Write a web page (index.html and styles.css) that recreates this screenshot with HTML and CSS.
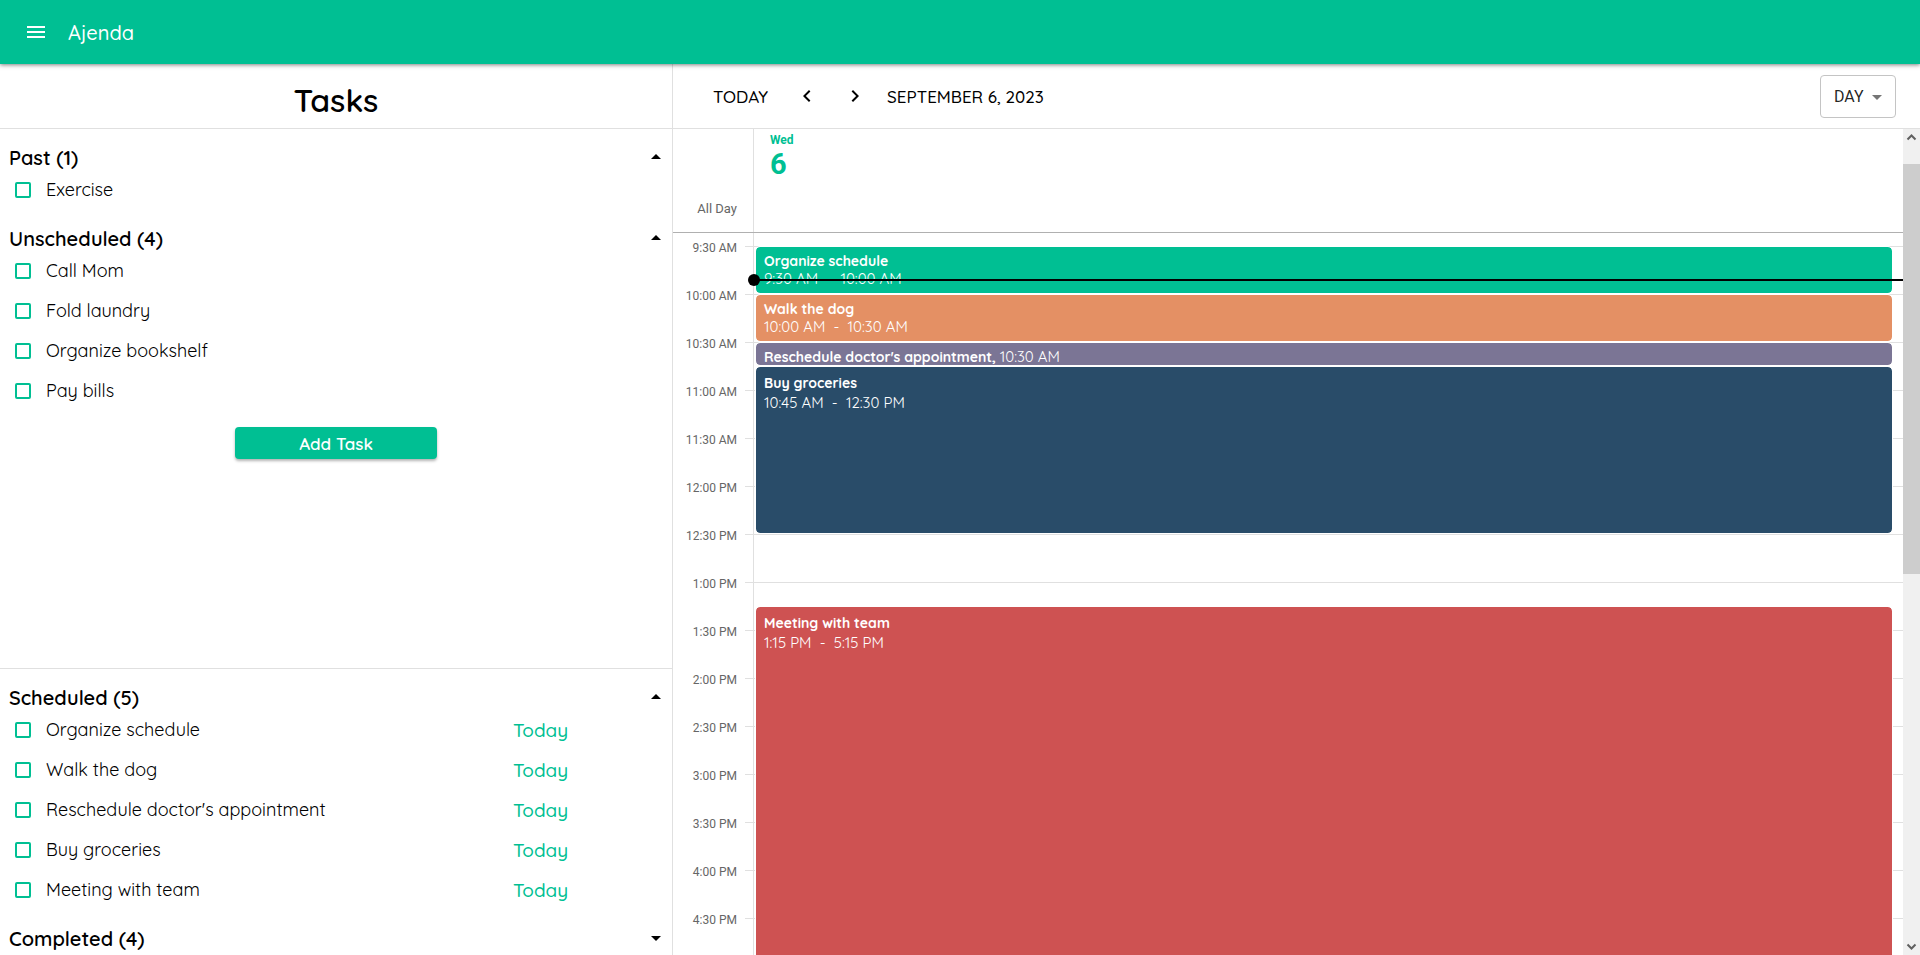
FILE: index.html
```html
<!DOCTYPE html>
<html lang="en">
<head>
<meta charset="utf-8">
<meta name="viewport" content="width=device-width, initial-scale=1">
<title>Ajenda</title>
<link rel="stylesheet" href="styles.css">
</head>
<body>
<header class="appbar">
  <button class="icon-button" aria-label="Open menu">
    <svg class="icon" viewBox="0 0 24 24"><path d="M3 18h18v-2H3v2zm0-5h18v-2H3v2zm0-7v2h18V6H3z"/></svg>
  </button>
  <span class="brand">Ajenda</span>
</header>
<main class="layout">
  <aside class="tasks">
    <h1 class="tasks-title">Tasks</h1>
    <div class="pane pane-open">
      <section>
        <div class="group-head"><h2>Past (1)</h2><button class="icon-button" aria-label="Collapse past"><svg class="icon" viewBox="0 0 24 24"><path d="m7 14 5-5 5 5z"/></svg></button></div>
        <ul class="task-list">
          <li><label class="task"><input type="checkbox"><span>Exercise</span></label></li>
        </ul>
      </section>
      <section>
        <div class="group-head"><h2>Unscheduled (4)</h2><button class="icon-button" aria-label="Collapse unscheduled"><svg class="icon" viewBox="0 0 24 24"><path d="m7 14 5-5 5 5z"/></svg></button></div>
        <ul class="task-list">
          <li><label class="task"><input type="checkbox"><span>Call Mom</span></label></li>
          <li><label class="task"><input type="checkbox"><span>Fold laundry</span></label></li>
          <li><label class="task"><input type="checkbox"><span>Organize bookshelf</span></label></li>
          <li><label class="task"><input type="checkbox"><span>Pay bills</span></label></li>
        </ul>
      </section>
      <button class="add-task">Add Task</button>
    </div>
    <div class="pane pane-scheduled">
      <section>
        <div class="group-head"><h2>Scheduled (5)</h2><button class="icon-button" aria-label="Collapse scheduled"><svg class="icon" viewBox="0 0 24 24"><path d="m7 14 5-5 5 5z"/></svg></button></div>
        <ul class="task-list">
          <li><label class="task"><input type="checkbox"><span>Organize schedule</span></label><span class="due">Today</span></li>
          <li><label class="task"><input type="checkbox"><span>Walk the dog</span></label><span class="due">Today</span></li>
          <li><label class="task"><input type="checkbox"><span>Reschedule doctor's appointment</span></label><span class="due">Today</span></li>
          <li><label class="task"><input type="checkbox"><span>Buy groceries</span></label><span class="due">Today</span></li>
          <li><label class="task"><input type="checkbox"><span>Meeting with team</span></label><span class="due">Today</span></li>
        </ul>
      </section>
      <section>
        <div class="group-head"><h2>Completed (4)</h2><button class="icon-button" aria-label="Expand completed"><svg class="icon" viewBox="0 0 24 24"><path d="m7 10 5 5 5-5z"/></svg></button></div>
      </section>
    </div>
  </aside>
  <section class="calendar">
    <div class="toolbar">
      <button class="text-button">TODAY</button>
      <div class="arrows">
        <button class="icon-button" aria-label="Previous day"><svg class="icon" viewBox="0 0 24 24"><path d="M15.41 7.41 14 6l-6 6 6 6 1.41-1.41L10.83 12z"/></svg></button>
        <button class="icon-button" aria-label="Next day"><svg class="icon" viewBox="0 0 24 24"><path d="M10 6 8.59 7.41 13.17 12l-4.58 4.59L10 18l6-6z"/></svg></button>
      </div>
      <button class="text-button">SEPTEMBER 6, 2023</button>
      <div class="view-picker">
        <select aria-label="View"><option>DAY</option><option>WEEK</option><option>MONTH</option></select>
        <svg class="icon" viewBox="0 0 24 24"><path d="m7 10 5 5 5-5z"/></svg>
      </div>
    </div>
    <div class="viewport">
      <div class="schedule">
        <div class="day-head">
          <div class="all-day">All Day</div>
          <div class="date"><span class="weekday">Wed</span><span class="day-number">6</span></div>
        </div>
        <div class="timetable">
          <div class="hours">
            <time>9:30 AM</time><time>10:00 AM</time><time>10:30 AM</time><time>11:00 AM</time><time>11:30 AM</time><time>12:00 PM</time><time>12:30 PM</time><time>1:00 PM</time><time>1:30 PM</time><time>2:00 PM</time><time>2:30 PM</time><time>3:00 PM</time><time>3:30 PM</time><time>4:00 PM</time><time>4:30 PM</time>
          </div>
          <div class="ticks"></div>
          <div class="day-column">
            <article class="event green span-2"><b>Organize schedule</b><span>9:30 AM &nbsp;-&nbsp; 10:00 AM</span></article>
            <article class="event orange span-2"><b>Walk the dog</b><span>10:00 AM &nbsp;-&nbsp; 10:30 AM</span></article>
            <article class="event purple inline span-1"><b>Reschedule doctor's appointment,</b> <span>10:30 AM</span></article>
            <article class="event navy tall span-7"><b>Buy groceries</b><span>10:45 AM &nbsp;-&nbsp; 12:30 PM</span></article>
            <article class="event red tall afternoon"><b>Meeting with team</b><span>1:15 PM &nbsp;-&nbsp; 5:15 PM</span></article>
            <div class="now"></div>
          </div>
        </div>
      </div>
      <div class="scrollbar" aria-hidden="true">
        <svg class="scroll-arrow" viewBox="0 0 17 17"><path d="m4.500 10.500 4-4 4 4"/></svg>
        <div class="track"><div class="thumb"></div></div>
        <svg class="scroll-arrow" viewBox="0 0 17 17"><path d="m4.500 6.500 4 4 4-4"/></svg>
      </div>
    </div>
  </section>
</main>
</body>
</html>
```
FILE: styles.css
```css
:root {
  --green: #00bf93;
  --line: #e0e0e0;
  --round: Quicksand, Lato, sans-serif;
  --ui: Roboto, "Liberation Sans", sans-serif;
}
* { box-sizing: border-box; }
body {
  margin: 0;
  height: 100vh;
  display: flex;
  flex-direction: column;
  overflow: hidden;
  font-family: var(--round);
  color: #000;
  background: #fff;
}
h1, h2, ul { margin: 0; padding: 0; }
button {
  border: 0;
  padding: 0;
  background: none;
  color: inherit;
  font-family: inherit;
  cursor: pointer;
}
.icon { display: block; width: 24px; height: 24px; fill: currentColor; }

.appbar {
  position: relative;
  z-index: 2;
  flex: none;
  display: flex;
  align-items: center;
  gap: 20px;
  height: 64px;
  padding: 0 24px;
  background: var(--green);
  color: #fff;
  box-shadow: 0 1px 4px rgba(0, 0, 0, .5);
}
.brand { padding-top: 2px; font-size: 20px; font-weight: 500; line-height: 32px; }

.layout { flex: 1; min-height: 0; display: grid; grid-template-columns: 35% 1fr; }

.tasks { display: flex; flex-direction: column; min-height: 0; }
.tasks-title {
  flex: none;
  height: 65px;
  padding-top: 8px;
  border-bottom: 1px solid var(--line);
  font-size: 32px;
  font-weight: 600;
  line-height: 56px;
  text-align: center;
}
.pane-open { flex: 1; min-height: 0; overflow: hidden; }
.pane-scheduled { flex: none; border-top: 1px solid var(--line); padding-bottom: 4px; }
.group-head {
  display: flex;
  justify-content: space-between;
  height: 41px;
  padding: 16px 4px 0 9px;
}
.group-head h2 { font-size: 20px; font-weight: 600; line-height: 25px; }
.group-head button { align-self: flex-start; }
.task-list { list-style: none; }
.task-list li {
  display: grid;
  grid-template-columns: 1fr 159px;
  align-items: center;
  height: 40px;
  padding-left: 15px;
}
.task {
  display: flex;
  align-items: center;
  gap: 15px;
  font-size: 18px;
  font-weight: 400;
  line-height: 24px;
}
.task input {
  appearance: none;
  width: 16px;
  height: 16px;
  margin: 0;
  border: 2px solid var(--green);
  border-radius: 2px;
}
.due { color: var(--green); font-size: 19px; font-weight: 500; }
.add-task {
  display: block;
  width: 30%;
  height: 32px;
  margin: 16px auto 0;
  border-radius: 4px;
  background: var(--green);
  color: #fff;
  font-size: 17px;
  font-weight: 600;
  box-shadow: 0 2px 3px rgba(0, 0, 0, .3);
}

.calendar { display: flex; flex-direction: column; min-width: 0; min-height: 0; border-left: 1px solid var(--line); }
.toolbar {
  flex: none;
  display: flex;
  align-items: center;
  gap: 20px;
  height: 65px;
  padding: 0 24px 0 40px;
  border-bottom: 1px solid var(--line);
}
.text-button { font-size: 17px; font-weight: 500; }
.arrows { display: flex; gap: 24px; padding-left: 7px; }
.view-picker { position: relative; margin-left: auto; }
.view-picker select {
  appearance: none;
  width: 76px;
  height: 43px;
  padding: 0 13px;
  border: 1px solid #c4c4c4;
  border-radius: 4px;
  background: #fff;
  color: rgba(0, 0, 0, .87);
  font-family: var(--ui);
  font-size: 16px;
}
.view-picker .icon { position: absolute; right: 7px; top: 10px; fill: #757575; pointer-events: none; }

.viewport { flex: 1; min-height: 0; display: grid; grid-template-columns: 1fr 17px; }
.schedule { display: flex; flex-direction: column; min-width: 0; min-height: 0; }
.day-head {
  flex: none;
  display: grid;
  grid-template-columns: 80px 1fr;
  height: 104px;
  border-bottom: 1px solid #b0b0b0;
  font-family: var(--ui);
}
.all-day { align-self: end; padding: 0 16px 15px 0; color: #666; font-size: 13px; line-height: 16px; text-align: right; }
.date { display: flex; flex-direction: column; padding: 3px 16px; border-left: 1px solid var(--line); color: var(--green); font-weight: 700; }
.weekday { font-size: 12px; line-height: 16px; }
.day-number { font-size: 29px; line-height: 32px; }

.timetable {
  flex: 1;
  min-height: 0;
  display: grid;
  grid-template-columns: 72px 8px 1fr;
  overflow: hidden;
}
.hours { display: flex; flex-direction: column; padding-top: 7px; }
.hours time {
  flex: none;
  height: 48px;
  padding-right: 8px;
  color: #666;
  font-family: var(--ui);
  font-size: 12px;
  line-height: 16px;
  text-align: right;
}
.ticks, .day-column {
  background: repeating-linear-gradient(var(--line) 0 1px, transparent 1px 48px) 0 13px no-repeat;
}
.day-column {
  position: relative;
  display: grid;
  grid-auto-rows: 24px;
  align-content: start;
  padding: 13px 10px 0 1px;
  border-left: 1px solid var(--line);
}
.event {
  overflow: hidden;
  padding: 5px 8px 0;
  border: 1px solid #fff;
  border-radius: 5px;
  background-clip: padding-box;
  color: #fff;
  font-size: 14px;
  line-height: 18px;
}
.event b, .event span { display: block; }
.event span { font-size: 15px; }
.event.inline b, .event.inline span { display: inline; }
.event.tall { padding-top: 7px; line-height: 19px; }
.span-1 { grid-row: span 1; }
.span-2 { grid-row: span 2; }
.span-7 { grid-row: span 7; }
.afternoon { grid-row: 16 / span 16; }
.green { background-color: var(--green); }
.orange { background-color: #e49064; }
.purple { background-color: #7b7595; }
.navy { background-color: #294c69; }
.red { background-color: #ce5252; }
.now {
  position: absolute;
  top: 46px;
  left: 0;
  right: 0;
  height: 2px;
  background: #000;
}
.now::before {
  content: "";
  position: absolute;
  left: -6px;
  top: -5px;
  width: 12px;
  height: 12px;
  border-radius: 50%;
  background: #000;
}

.scrollbar { display: flex; flex-direction: column; background: #f0f0f0; }
.scroll-arrow { flex: none; width: 17px; height: 17px; fill: none; stroke: #606060; stroke-width: 2; }
.track { flex: 1; padding-top: 18px; }
.thumb { height: 53%; background: #cdcdcd; }
```
